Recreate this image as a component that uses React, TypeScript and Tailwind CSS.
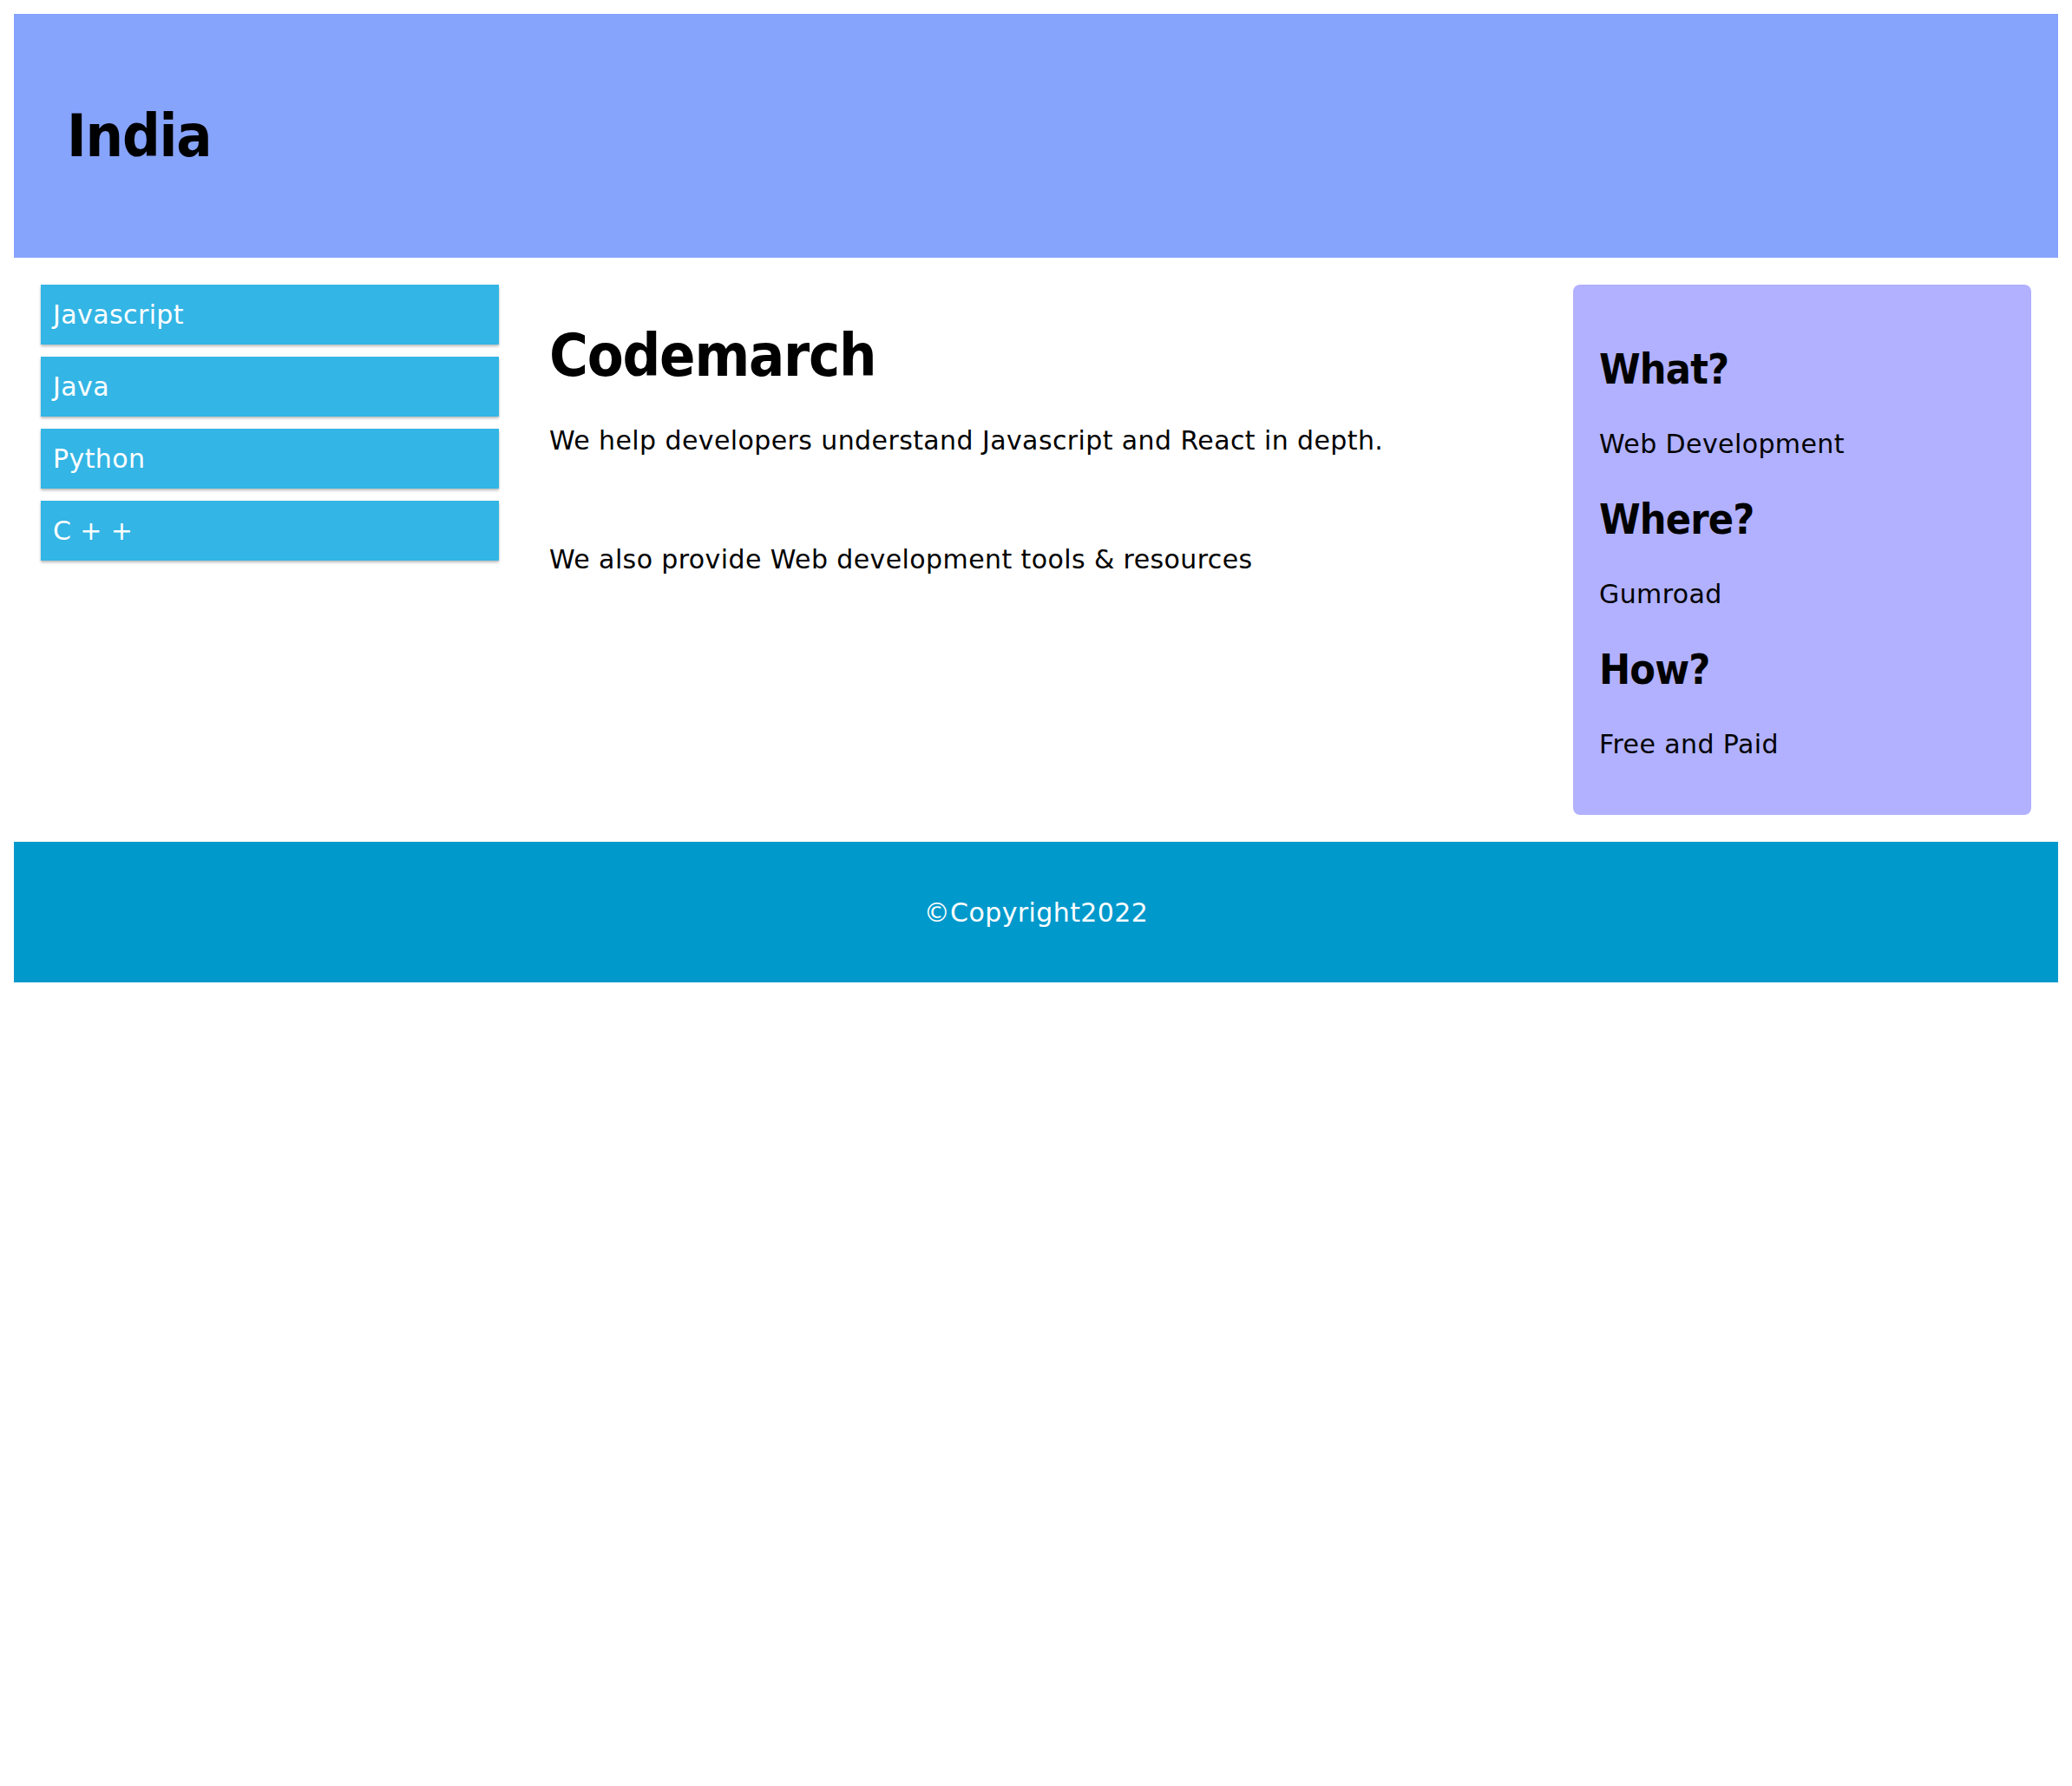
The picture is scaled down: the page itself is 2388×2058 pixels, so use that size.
import React from 'react';

const languages = ['Javascript', 'Java', 'Python', 'C + +'];

const facts = [
  { q: 'What?', a: 'Web Development' },
  { q: 'Where?', a: 'Gumroad' },
  { q: 'How?', a: 'Free and Paid' },
];

// headings in the screenshot use a narrow bold face
const heading = "font-['DejaVu_Sans_Condensed','DejaVu_Sans',sans-serif] font-bold font-stretch-condensed";

const App: React.FC = () => {
  return (
    <div className="min-h-screen bg-white p-4 font-['DejaVu_Sans',sans-serif] tracking-[0.4px] text-black">
      <header className="flex h-[281px] items-center bg-[#87a4fd] pl-[61px]">
        <h1 className={`${heading} text-[68px] leading-[79px] tracking-[-1.2px]`}>India</h1>
      </header>

      <div className="flex items-start px-[31px] py-[31px]">
        <nav className="flex w-[528px] shrink-0 flex-col gap-[14px]">
          {languages.map((lang) => (
            <a
              key={lang}
              href="#"
              className="flex h-[69px] items-start bg-[#33b5e5] pl-[14px] pt-[17px] text-[30px] leading-[35px] text-white shadow-[0_2px_3px_rgba(0,0,0,0.28)]"
            >
              {lang}
            </a>
          ))}
        </nav>

        <main className="flex-1 px-[58px] pt-[42px]">
          <h1 className={`${heading} text-[68px] leading-[79px] tracking-[-1.2px]`}>Codemarch</h1>
          <p className="mt-[41px] text-[30px] leading-[35px]">
            We help developers understand Javascript and React in depth.
          </p>
          <p className="mt-[102px] text-[30px] leading-[35px]">
            We also provide Web development tools &amp; resources
          </p>
        </main>

        <aside className="flex w-[528px] shrink-0 flex-col gap-[41px] rounded-lg bg-[#b1b1ff] px-[30px] pb-[64px] pt-[69px]">
          {facts.map((f) => (
            <React.Fragment key={f.q}>
              <h2 className={`${heading} text-[48px] leading-[56px] tracking-[-0.8px]`}>{f.q}</h2>
              <p className="text-[30px] leading-[35px]">{f.a}</p>
            </React.Fragment>
          ))}
        </aside>
      </div>

      <footer className="flex h-[162px] items-center justify-center bg-[#0099cc]">
        <p className="text-[30px] leading-[35px] text-white">©Copyright2022</p>
      </footer>
    </div>
  );
};

export default App;
